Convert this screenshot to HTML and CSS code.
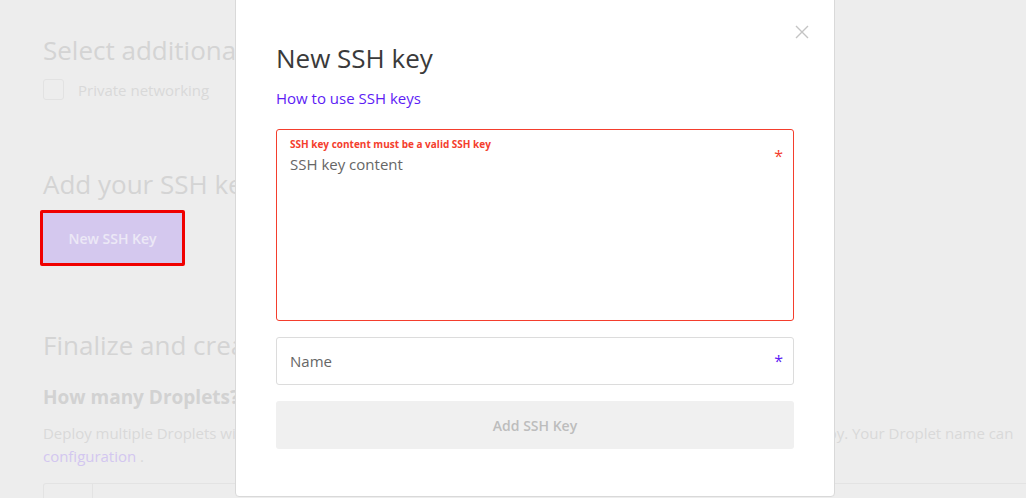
FILE: index.html
```html
<!DOCTYPE html>
<html>
<head>
<meta charset="utf-8">
<link rel="stylesheet" href="styles.css">
</head>
<body>
<main class="page">
  <section class="section">
    <h2 class="section-title">Select additional options</h2>
    <label class="check-row"><span class="checkbox"></span><span class="check-label">Private networking</span></label>
  </section>
  <section class="section ssh">
    <h2 class="section-title">Add your SSH keys</h2>
    <button class="new-key">New SSH Key</button>
  </section>
  <section class="section final">
    <h2 class="section-title">Finalize and create</h2>
    <h3 class="sub-title">How many Droplets?</h3>
    <p class="desc">Deploy multiple Droplets with the same configuration. Droplets will all be named in sequence each time you deploy. Your Droplet name can<br><a class="desc-link">configuration</a> .</p>
    <div class="qty-box"><div class="qty-cell"></div><div class="qty-cell wide"></div></div>
  </section>
</main>

<div class="modal">
  <button class="close" aria-label="Close">
    <svg width="14" height="14" viewBox="0 0 14 14"><path d="M1 1L13 13M13 1L1 13" stroke="#c4c4c4" stroke-width="1.4" fill="none"/></svg>
  </button>
  <h1 class="modal-title">New SSH key</h1>
  <a class="help-link">How to use SSH keys</a>
  <div class="field area error">
    <div class="error-msg">SSH key content must be a valid SSH key</div>
    <div class="placeholder">SSH key content</div>
    <span class="req red">*</span>
  </div>
  <div class="field input">
    <div class="placeholder">Name</div>
    <span class="req blue">*</span>
  </div>
  <button class="submit">Add SSH Key</button>
</div>
</body>
</html>
```
FILE: styles.css
```css
html, body {
  margin: 0;
  padding: 0;
}
body {
  background: #ededed;
  font-family: "Open Sans", "Liberation Sans", sans-serif;
  width: 1026px;
  height: 498px;
  overflow: hidden;
  position: relative;
}
.page {
  padding: 32px 0 0 43px;
}
.section-title {
  margin: 0;
  font-size: 26px;
  font-weight: 400;
  color: #d4d4d4;
  line-height: 36px;
  white-space: nowrap;
}
.check-row {
  display: flex;
  align-items: center;
  gap: 14px;
  margin-top: 11px;
}
.checkbox {
  width: 19px;
  height: 19px;
  border: 1px solid #e2e2e2;
  border-radius: 3px;
}
.check-label {
  font-size: 15px;
  color: #d9d9d9;
}
.ssh {
  margin-top: 66px;
}
.new-key {
  margin-top: 8px;
  margin-left: -3px;
  width: 145px;
  height: 56px;
  border: 3px solid #f00000;
  border-radius: 2px;
  background: #d4c8ee;
  color: #ece8f6;
  font-family: inherit;
  font-size: 14px;
  font-weight: 600;
}
.final {
  margin-top: 61px;
}
.sub-title {
  margin: 21px 0 0;
  font-size: 19px;
  font-weight: 700;
  color: #d2d2d2;
}
.desc {
  margin: 12px 0 0;
  font-size: 15px;
  line-height: 23px;
  color: #d9d9d9;
  white-space: nowrap;
  letter-spacing: -0.02px;
}
.desc-link {
  color: #d3c7f0;
}
.qty-box {
  margin-top: 15px;
  display: flex;
  height: 14px;
  border: 1px solid #e3e3e3;
  border-bottom: 0;
  border-radius: 3px 3px 0 0;
  width: 1000px;
}
.qty-cell {
  width: 48px;
  border-right: 1px solid #e3e3e3;
}
.qty-cell.wide {
  flex: 1;
  border: 0;
}

.modal {
  position: absolute;
  left: 235px;
  top: -10px;
  width: 600px;
  height: 507px;
  box-sizing: border-box;
  background: #fff;
  border: 1px solid #d9d9d9;
  border-radius: 4px;
  padding: 46px 40px 0 40px;
}
.close {
  position: absolute;
  right: 25px;
  top: 34px;
  background: none;
  border: 0;
  padding: 0;
  width: 14px;
  height: 14px;
}
.modal-title {
  margin: 0;
  font-size: 26px;
  font-weight: 400;
  color: #3a3a3a;
  line-height: 42px;
}
.help-link {
  display: block;
  margin-top: 9px;
  font-size: 15px;
  color: #5d1cf5;
}
.field {
  position: relative;
  box-sizing: border-box;
  border: 1px solid #dcdcdc;
  border-radius: 3px;
  padding: 0 13px;
}
.field.area {
  margin-top: 21px;
  height: 192px;
  border-color: #f43e2d;
  padding-top: 7px;
}
.error-msg {
  font-size: 10px;
  font-weight: 700;
  color: #f43e2d;
  line-height: 14px;
}
.placeholder {
  font-size: 15px;
  color: #666;
  line-height: 22px;
}
.area .placeholder {
  line-height: 26px;
}
.field.input {
  margin-top: 16px;
  height: 48px;
  display: flex;
  align-items: center;
}
.req {
  position: absolute;
  right: 10px;
  font-size: 16px;
}
.req.red {
  color: #f43e2d;
  top: 15px;
}
.req.blue {
  color: #5d1cf5;
  top: 12px;
}
.submit {
  display: block;
  margin-top: 16px;
  width: 100%;
  height: 48px;
  border: 0;
  border-radius: 3px;
  background: #f0f0f0;
  color: #bdbdbd;
  font-family: inherit;
  font-size: 14px;
  font-weight: 600;
}
```
